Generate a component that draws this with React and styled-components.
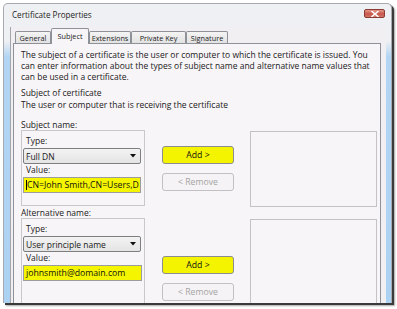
import React from 'react';
import styled, { createGlobalStyle } from 'styled-components';

const Global = createGlobalStyle`
  html, body { margin: 0; padding: 0; background: #ffffff; }
  body {
    font-family: "Open Sans", "Noto Sans", sans-serif;
    font-size: 8.5px;
    color: #1a1a1a;
  }
  * { box-sizing: border-box; }
`;

const Stage = styled.div`
  width: 397px;
  height: 309px;
  padding: 3px 0 0 3px;
  overflow: hidden;
`;

const Window = styled.div`
  width: 389px;
  height: 300px;
  border: 1px solid #a7aaaf;
  border-bottom: none;
  border-radius: 5px 5px 0 0;
  background: #eef0f3;
  box-shadow: 2px 2px 0 #3a3a3a, 3px 3px 2px rgba(0, 0, 0, 0.35);
  display: flex;
  flex-direction: column;
  overflow: hidden;
`;

const TitleBar = styled.div`
  height: 23px;
  flex: none;
  display: flex;
  align-items: flex-start;
  justify-content: space-between;
  padding: 0 6px 0 8px;
`;

const Title = styled.div`
  margin-top: 5px;
  line-height: 12px;
  font-size: 8.1px;
  color: #1e1e1e;
`;

const CloseButton = styled.div`
  margin-top: 5px;
  width: 21px;
  height: 9px;
  border: 1px solid #8b3b33;
  border-radius: 2px;
  background: linear-gradient(#e59a8c, #c8564a 55%, #d0786a);
  display: flex;
  align-items: center;
  justify-content: center;
`;

const Body = styled.div`
  flex: 1;
  display: flex;
  min-height: 0;
`;

const Frame = styled.div`
  width: ${(p) => p.$w}px;
  flex: none;
  background: linear-gradient(#eef0f3 0px, #eef0f3 14px, #b2d5f3 30px, #acd2f3 100%);
`;

const Client = styled.div`
  flex: 1;
  display: flex;
  flex-direction: column;
  border-left: 1px solid #a3a5a9;
  background: #f2eff2;
  padding: 1px 5px 0 2px;
  min-width: 0;
`;

const TabStrip = styled.div`
  height: 15px;
  flex: none;
  display: flex;
  align-items: flex-end;
  padding-left: 2px;
`;

const Tab = styled.div`
  width: ${(p) => p.$w}px;
  height: ${(p) => (p.$active ? 16 : 12)}px;
  margin-bottom: ${(p) => (p.$active ? -1 : 0)}px;
  padding-bottom: ${(p) => (p.$active ? 2 : 0)}px;
  display: flex;
  align-items: center;
  justify-content: center;
  border: 1px solid #8e9197;
  border-bottom: none;
  border-radius: 2px 2px 0 0;
  background: ${(p) => (p.$active ? '#f8f5f8' : 'linear-gradient(#f4f4f4, #e2e2e3)')};
  position: relative;
  z-index: ${(p) => (p.$active ? 1 : 0)};
  white-space: nowrap;
  color: #1a1a1a;
  font-size: 7.3px;
`;

const Panel = styled.div`
  flex: 1;
  border: 1px solid #8e9197;
  border-bottom: none;
  background: #f8f5f8;
  padding: 5px 3px 0 7px;
  overflow: hidden;
`;

const Text = styled.div`
  line-height: 11px;
  margin-top: ${(p) => p.$mt || 0}px;
  white-space: nowrap;
`;

const Row = styled.div`
  display: flex;
  align-items: flex-start;
`;

const GroupBox = styled.div`
  width: 124px;
  height: ${(p) => p.$h}px;
  flex: none;
  border: 1px solid #cbc7cb;
  padding: 4px 3px 0 1px;
`;

const FieldLabel = styled.div`
  line-height: 11px;
  padding-left: 3px;
  margin-bottom: 2px;
`;

const Select = styled.div`
  height: 16px;
  width: 118px;
  border: 1px solid #7d7e80;
  border-radius: 2px;
  background: linear-gradient(#f3f3f3, #e4e4e4);
  display: flex;
  align-items: center;
  justify-content: space-between;
  padding: 0 4px 0 2px;
  white-space: nowrap;
`;

const Input = styled.div`
  height: 16px;
  width: ${(p) => p.$w || 118}px;
  border: 1px solid #9c9c9c;
  background: #f5f500;
  display: flex;
  align-items: center;
  padding-left: 2px;
  overflow: hidden;
  white-space: nowrap;
  color: #111;
  font-size: 8.7px;
`;

const Caret = styled.span`
  display: inline-block;
  width: 1px;
  height: 10px;
  background: #000;
  flex: none;
`;

const ButtonColumn = styled.div`
  margin-left: 17px;
  width: 72px;
  flex: none;
  padding-top: ${(p) => p.$top}px;
  display: flex;
  flex-direction: column;
  gap: ${(p) => p.$gap}px;
`;

const Button = styled.div`
  height: 18px;
  display: flex;
  align-items: center;
  justify-content: center;
  border: 1px solid ${(p) => (p.$disabled ? '#c2c0c2' : '#8c8c8c')};
  border-radius: 3px;
  background: ${(p) => (p.$highlight ? '#f4f400' : '#f5f3f5')};
  color: ${(p) => (p.$disabled ? '#a3a3a3' : '#111')};
  white-space: nowrap;
  font-size: 8.7px;
`;

const ListBox = styled.div`
  margin-left: 16px;
  margin-top: 1px;
  width: 127px;
  height: ${(p) => p.$h}px;
  flex: none;
  border: 1px solid #c5c1c5;
  background: #f8f5f8;
`;

const Arrow = () => (
  <svg width="6" height="4" viewBox="0 0 6 4">
    <path d="M0 0 H6 L3 3.5 Z" fill="#111" />
  </svg>
);

const CloseGlyph = () => (
  <svg width="8" height="6" viewBox="0 0 8 6">
    <path d="M1 0.5 L7 5.5 M7 0.5 L1 5.5" stroke="#fff" strokeWidth="1.6" strokeLinecap="round" />
  </svg>
);

const tabs = [
  { label: 'General', w: 36 },
  { label: 'Subject', w: 38, active: true },
  { label: 'Extensions', w: 42 },
  { label: 'Private Key', w: 55 },
  { label: 'Signature', w: 42 },
];

function NameSection({ label, type, value, boxH, listH, btnTop, btnGap, caret, inputW }) {
  return (
    <>
      <Text>{label}</Text>
      <Row>
        <GroupBox $h={boxH}>
          <FieldLabel>Type:</FieldLabel>
          <Select>
            <span>{type}</span>
            <Arrow />
          </Select>
          <FieldLabel>Value:</FieldLabel>
          <Input $w={inputW}>
            {caret && <Caret />}
            <span>{value}</span>
          </Input>
        </GroupBox>
        <ButtonColumn $top={btnTop} $gap={btnGap}>
          <Button $highlight>Add &gt;</Button>
          <Button $disabled>&lt; Remove</Button>
        </ButtonColumn>
        <ListBox $h={listH} />
      </Row>
    </>
  );
}

export default function App() {
  return (
    <>
      <Global />
      <Stage>
        <Window>
          <TitleBar>
            <Title>Certificate Properties</Title>
            <CloseButton>
              <CloseGlyph />
            </CloseButton>
          </TitleBar>
          <Body>
            <Frame $w={6} />
            <Client>
              <TabStrip>
                {tabs.map((t) => (
                  <Tab key={t.label} $w={t.w} $active={t.active}>
                    {t.label}
                  </Tab>
                ))}
              </TabStrip>
              <Panel>
                <Text>
                  The subject of a certificate is the user or computer to which the certificate is issued. You
                  <br />
                  can enter information about the types of subject name and alternative name values that
                  <br />
                  can be used in a certificate.
                </Text>
                <Text $mt={5}>Subject of certificate</Text>
                <Text $mt={1}>The user or computer that is receiving the certificate</Text>
                <Text $mt={9} />
                <NameSection
                  label="Subject name:"
                  type="Full DN"
                  value="CN=John Smith,CN=Users,D"
                  boxH={76}
                  listH={76}
                  btnTop={16}
                  btnGap={9}
                  caret
                />
                <NameSection
                  label="Alternative name:"
                  type="User principle name"
                  value="johnsmith@domain.com"
                  boxH={120}
                  listH={120}
                  btnTop={38}
                  btnGap={9}
                  inputW={119}
                />
              </Panel>
            </Client>
            <Frame $w={5} />
          </Body>
        </Window>
      </Stage>
    </>
  );
}
